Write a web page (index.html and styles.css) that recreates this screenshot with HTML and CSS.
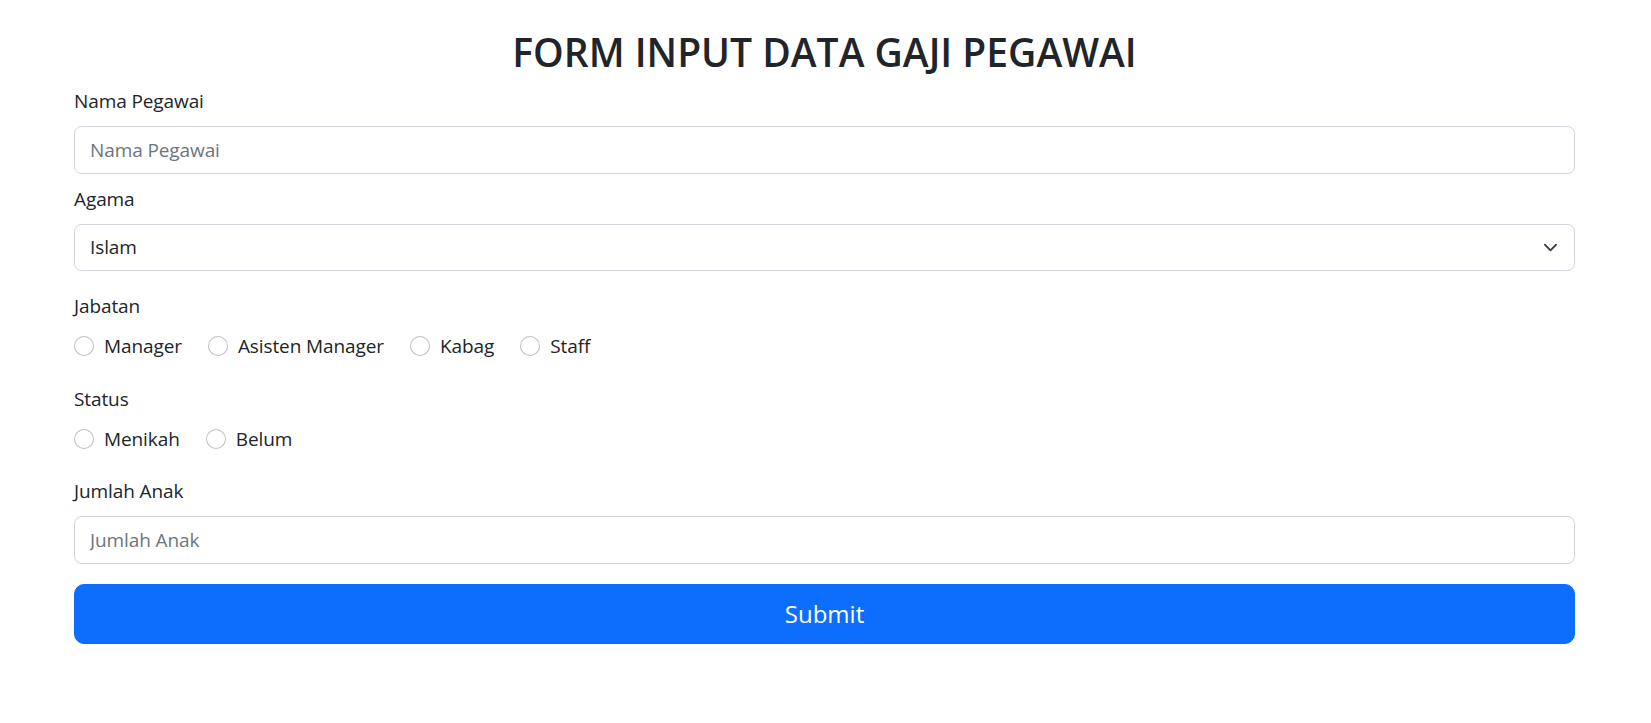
FILE: index.html
```
<!DOCTYPE html>
<html lang="id">
<head>
<meta charset="utf-8">
<title>Form Input Data Gaji Pegawai</title>
<link rel="stylesheet" href="styles.css">
</head>
<body>
<div class="page">
  <h3 class="title">FORM INPUT DATA GAJI PEGAWAI</h3>
  <form class="form">
    <div class="group group-tight">
      <label class="form-label" for="nama">Nama Pegawai</label>
      <input class="form-control" type="text" id="nama" placeholder="Nama Pegawai">
    </div>
    <div class="group">
      <label class="form-label" for="agama">Agama</label>
      <div class="select-wrap">
        <select class="form-select" id="agama">
          <option>Islam</option>
          <option>Kristen</option>
          <option>Katolik</option>
          <option>Hindu</option>
          <option>Budha</option>
        </select>
        <svg class="chevron" viewBox="0 0 16 16" width="15" height="15" aria-hidden="true"><path d="M2 5l6 6 6-6" fill="none" stroke="#343a40" stroke-width="2" stroke-linecap="round" stroke-linejoin="round"/></svg>
      </div>
    </div>
    <div class="group">
      <div class="form-label">Jabatan</div>
      <div class="checks">
        <label class="check"><input class="radio" type="radio" name="jabatan"><span>Manager</span></label>
        <label class="check"><input class="radio" type="radio" name="jabatan"><span>Asisten Manager</span></label>
        <label class="check"><input class="radio" type="radio" name="jabatan"><span>Kabag</span></label>
        <label class="check"><input class="radio" type="radio" name="jabatan"><span>Staff</span></label>
      </div>
    </div>
    <div class="group">
      <div class="form-label">Status</div>
      <div class="checks">
        <label class="check"><input class="radio" type="radio" name="status"><span>Menikah</span></label>
        <label class="check"><input class="radio" type="radio" name="status"><span>Belum</span></label>
      </div>
    </div>
    <div class="group">
      <label class="form-label" for="anak">Jumlah Anak</label>
      <input class="form-control" type="text" id="anak" placeholder="Jumlah Anak">
    </div>
    <button class="btn-submit" type="submit">Submit</button>
  </form>
</div>
</body>
</html>
```
FILE: styles.css
```
* { box-sizing: border-box; }
html, body { margin: 0; padding: 0; background: #fff; }
body {
  font-family: "Open Sans", "Noto Sans", sans-serif;
  font-size: 19px;
  letter-spacing: -0.1px;
  line-height: 30px;
  color: #212529;
}
.page { padding: 28px 76px 0 74px; }
.title {
  margin: 0 0 10px;
  text-align: center;
  font-size: 39px;
  line-height: 48px;
  font-weight: 600;
  letter-spacing: 0;
}
.form { display: flex; flex-direction: column; }
.group { margin-bottom: 20px; }
.group-tight { margin-bottom: 10px; }
.form-label { display: block; margin-bottom: 10px; }
.form-control, .form-select {
  display: block;
  width: 100%;
  height: 47.5px;
  padding: 7.5px 15px;
  font: inherit;
  letter-spacing: inherit;
  color: #212529;
  background: #fff;
  border: 1.25px solid #ced4da;
  border-radius: 7.5px;
  outline: none;
  appearance: none;
  -webkit-appearance: none;
}
.form-control::placeholder { color: #6c757d; opacity: 1; }
.select-wrap { position: relative; }
.form-select { padding-right: 50px; }
.chevron { position: absolute; right: 17.5px; top: 16px; pointer-events: none; }
.checks { display: flex; flex-wrap: wrap; gap: 0 26px; margin-bottom: 2.5px; }
.check { display: inline-flex; align-items: center; gap: 10px; cursor: pointer; }
.radio {
  appearance: none;
  -webkit-appearance: none;
  width: 20px;
  height: 20px;
  margin: 0;
  border: 1.25px solid rgba(0,0,0,.25);
  border-radius: 50%;
  background: #fff;
  flex: none;
}
.btn-submit {
  display: block;
  width: 100%;
  height: 60px;
  padding: 10px 20px;
  font: inherit;
  font-size: 24px;
  line-height: 37.5px;
  letter-spacing: 0;
  color: #fff;
  background: #0d6efd;
  border: 1.25px solid #0d6efd;
  border-radius: 10px;
  cursor: pointer;
}
```
